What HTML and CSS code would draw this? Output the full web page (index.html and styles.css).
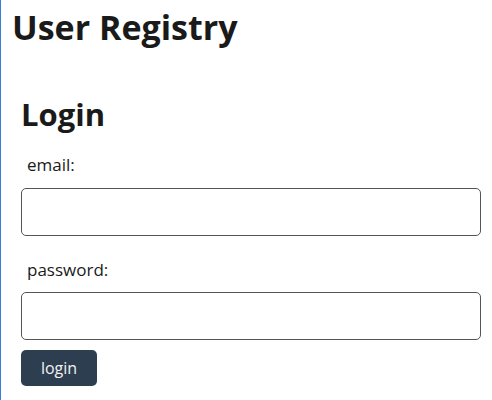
FILE: index.html
```html
<!DOCTYPE html>
<html>
<head>
<meta charset="utf-8">
<link rel="stylesheet" href="styles.css">
</head>
<body>
<div class="app">
  <h1 class="title">User Registry</h1>
  <section class="login">
    <h2 class="login-title">Login</h2>
    <form class="form">
      <label class="label label-email">email:</label>
      <input class="input input-email" type="text">
      <label class="label label-password">password:</label>
      <input class="input input-password" type="password">
      <button class="btn" type="button">login</button>
    </form>
  </section>
</div>
</body>
</html>
```
FILE: styles.css
```css
html, body {
  margin: 0;
  padding: 0;
  background: #fff;
}
body {
  font-family: "Open Sans", "Noto Sans", sans-serif;
  color: #1a1a1a;
}
.app {
  border-left: 1px solid #3b7ddd;
  min-height: 100vh;
  box-sizing: border-box;
  padding: 0 10px 0 11px;
  display: flex;
  flex-direction: column;
}
.title {
  margin: 0;
  padding-top: 4px;
  font-size: 34px;
  font-weight: 700;
  line-height: 46px;
}
.login {
  padding: 0 0 0 9px;
  display: flex;
  flex-direction: column;
}
.login-title {
  margin: 44px 0 0 0;
  font-size: 31px;
  font-weight: 700;
  line-height: 40px;
}
.form {
  display: flex;
  flex-direction: column;
  align-items: flex-start;
}
.label {
  font-size: 17px;
  line-height: 23px;
  padding-left: 6px;
}
.label-email {
  margin-top: 19px;
}
.label-password {
  margin-top: 22px;
}
.input {
  box-sizing: border-box;
  width: 460px;
  height: 48px;
  border: 1px solid #555;
  border-radius: 5px;
  margin: 12px 0 0 0;
  padding: 0 10px;
}
.input-password {
  margin-top: 11px;
}
.btn {
  margin-top: 10px;
  width: 76px;
  height: 36px;
  background: #2c3e50;
  color: #f2f2f2;
  border: none;
  border-radius: 5px;
  font-family: inherit;
  font-size: 16px;
  padding: 0;
}
```
